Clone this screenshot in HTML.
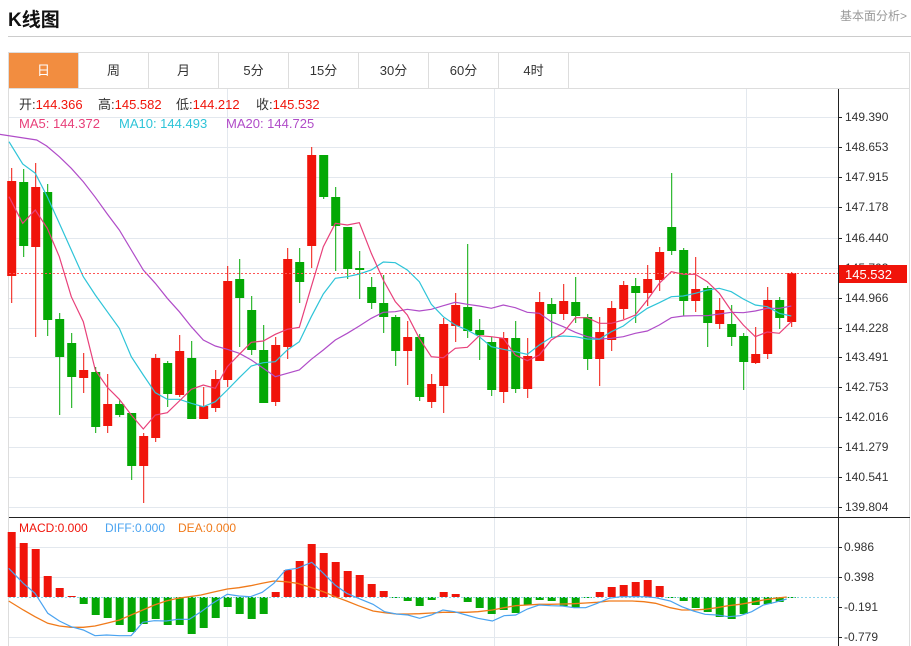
<!DOCTYPE html>
<html><head><meta charset="utf-8"><style>
*{margin:0;padding:0;box-sizing:border-box}
body{width:911px;height:646px;background:#fff;font-family:"Liberation Sans","Noto Sans CJK SC",sans-serif;position:relative;overflow:hidden}
.t{position:absolute;left:8px;top:5px;font-size:19px;font-weight:bold;color:#111}
.r{position:absolute;right:4px;top:7px;font-size:12px;color:#999}
.hr{position:absolute;left:8px;right:0;top:36px;border-top:1px solid #ccc}
.tabs{position:absolute;left:8px;top:52px;width:902px;height:37px;border:1px solid #ddd;border-bottom:1px solid #ddd}
.tab{position:absolute;top:0;height:35px;width:70px;line-height:35px;text-align:center;font-size:13px;color:#333;border-right:1px solid #ddd}
.on{background:#f28d40;color:#fff}
svg{position:absolute;left:0;top:0}
</style></head><body>
<div class="t">K线图</div><div class="r">基本面分析&gt;</div>
<div class="hr"></div>
<div class="tabs">
<div class="tab on" style="left:0">日</div><div class="tab" style="left:70px">周</div><div class="tab" style="left:140px">月</div><div class="tab" style="left:210px">5分</div><div class="tab" style="left:280px">15分</div><div class="tab" style="left:350px">30分</div><div class="tab" style="left:420px">60分</div><div class="tab" style="left:490px">4时</div>
</div>
<svg id="s" width="911" height="646" xmlns="http://www.w3.org/2000/svg" font-family="Liberation Sans, Noto Sans CJK SC, sans-serif">
<line x1="8.5" y1="89" x2="8.5" y2="646" stroke="#ddd"/>
<line x1="909.5" y1="89" x2="909.5" y2="646" stroke="#ddd"/>
<g id="grid" stroke="#e3e8ee" stroke-width="1"></g>
<g id="c"></g>
<g id="m"></g>
<line x1="9" y1="273.5" x2="838" y2="273.5" stroke="#f55" stroke-dasharray="2,2"/>
<line x1="838.5" y1="89" x2="838.5" y2="646" stroke="#222"/>
<line x1="9" y1="517.5" x2="910" y2="517.5" stroke="#222"/>
<g id="ax" font-size="12" fill="#333"></g>
<rect x="839" y="265" width="68" height="18" fill="#f0140a"/>
<text x="845" y="279" font-size="13" fill="#fff">145.532</text>
<g font-size="13">
<text x="19" y="109" fill="#333">开:<tspan fill="#f0140a">144.366</tspan></text>
<text x="98" y="109" fill="#333">高:<tspan fill="#f0140a">145.582</tspan></text>
<text x="176" y="109" fill="#333">低:<tspan fill="#f0140a">144.212</tspan></text>
<text x="256" y="109" fill="#333">收:<tspan fill="#f0140a">145.532</tspan></text>
<text x="19" y="128" fill="#e8407a">MA5: 144.372</text>
<text x="119" y="128" fill="#2ec4d8">MA10: 144.493</text>
<text x="226" y="128" fill="#b04cc8">MA20: 144.725</text>
</g>
<g font-size="12">
<text x="19" y="532" fill="#f0140a">MACD:0.000</text>
<text x="105" y="532" fill="#4aa3f0">DIFF:0.000</text>
<text x="178" y="532" fill="#f07a1a">DEA:0.000</text>
</g>
</svg>
<script>
var NS="http://www.w3.org/2000/svg";
function el(p,t,a){var e=document.createElementNS(NS,t);for(var k in a)e.setAttribute(k,a[k]);document.getElementById(p).appendChild(e);return e;}
var hy=[117,147,177,207,238,268,298,328,357,387,417,447,477,507];
var lb=["149.390","148.653","147.915","147.178","146.440","145.703","144.966","144.228","143.491","142.753","142.016","141.279","140.541","139.804"];
hy.forEach(function(y,i){el("grid","line",{x1:9,x2:838,y1:y+.5,y2:y+.5});el("ax","line",{x1:838,x2:842,y1:y+.5,y2:y+.5,stroke:"#222"});var t=el("ax","text",{x:845,y:y+4});t.textContent=lb[i];});
[227,494,746].forEach(function(x){el("grid","line",{x1:x+.5,x2:x+.5,y1:89,y2:646});});
[547,577,637].forEach(function(y){el("grid","line",{x1:9,x2:838,y1:y+.5,y2:y+.5});});
[["0.986",547],["0.398",577],["-0.191",607],["-0.779",637]].forEach(function(a){el("ax","line",{x1:838,x2:842,y1:a[1]+.5,y2:a[1]+.5,stroke:"#222"});var t=el("ax","text",{x:844,y:a[1]+4});t.textContent=a[0];});
var C=[[1,181,276,168,303],[0,182,246,169,257],[1,187,247,163,337],[0,192,320,184,336],[0,319,357,313,415],[0,343,377,333,408],[1,370,378,353,393],[0,372,427,367,433],[1,404,426,374,433],[0,404,415,400,417],[0,413,466,413,480],[1,436,466,433,503],[1,358,438,354,442],[0,363,394,361,407],[1,351,395,335,397],[0,358,419,341,419],[1,406,419,387,419],[1,379,408,370,412],[1,281,380,266,387],[0,279,298,259,347],[0,310,350,296,355],[0,350,403,325,403],[1,345,402,337,406],[1,259,347,248,359],[0,262,282,248,303],[1,155,246,147,268],[0,155,197,155,199],[0,197,226,187,271],[0,227,269,227,279],[0,268,270,251,299],[0,287,303,277,309],[0,303,317,275,333],[0,317,351,315,366],[1,337,351,321,385],[0,337,397,334,401],[1,384,402,374,408],[1,324,386,318,413],[1,305,326,293,342],[0,307,331,244,338],[0,330,335,319,360],[0,342,390,337,396],[1,338,392,332,403],[0,338,389,321,393],[1,356,389,338,398],[1,302,361,292,361],[0,304,314,298,338],[1,301,314,284,320],[0,302,316,277,323],[0,317,359,314,370],[1,332,359,317,386],[1,308,340,301,351],[1,285,309,281,319],[0,286,293,278,323],[1,279,293,265,306],[1,252,280,247,291],[0,227,251,173,255],[0,250,301,248,316],[1,289,301,257,312],[0,288,323,286,347],[1,310,324,298,329],[0,324,337,305,346],[0,336,362,333,390],[1,354,363,327,364],[1,300,354,287,359],[0,300,318,297,329],[1,273,322,272,327]];
C.forEach(function(c,i){var x=11.7+12*i,col=c[0]?"#f0140a":"#04a805";
el("c","line",{x1:x,x2:x,y1:c[3],y2:c[4],stroke:col,"stroke-width":1});
el("c","rect",{x:x-4.5,y:c[1],width:9,height:Math.max(1,c[2]-c[1]),fill:col});});
function pl(g,pts,col,sx,ox,sy,oy,w){var s=pts.map(function(p){return (ox+p[0]/sx).toFixed(1)+","+(oy+p[1]/sy).toFixed(1)}).join(" ");el(g,"polyline",{points:s,fill:"none",stroke:col,"stroke-width":w||1.2});}
var ma5a=[[27,170],[68,250],[106,210],[142,265],[178,350],[214,470],[250,545],[286,690],[322,742],[358,778],[394,825],[430,867],[466,825],[502,818],[538,783],[574,748],[610,735],[646,745],[682,680],[718,643],[754,607],[790,603],[826,583],[862,568],[898,562],[934,440],[970,320],[1006,250],[1042,255],[1078,248],[1114,340],[1150,420],[1186,485],[1222,525],[1258,595],[1294,650],[1330,653],[1366,625]];
var ma5b=[[52,622],[88,587],[124,590],[160,595],[196,645],[232,662],[268,645],[304,600],[340,578],[376,533],[412,533],[448,550],[484,550],[520,540],[556,525],[592,480],[628,430],[664,395],[700,403],[736,403],[772,425],[808,460],[844,512],[880,555],[916,590],[952,576],[988,580],[1024,545]];
var ma10a=[[27,5],[68,72],[106,100],[142,170],[178,250],[214,330],[250,410],[286,465],[322,515],[358,565],[394,650],[430,705],[466,758],[502,778],[538,778],[574,790],[610,800],[646,785],[682,750],[718,713],[754,678],[790,668],[826,665],[862,630],[898,605],[934,530],[970,462],[1006,415],[1042,410],[1078,402],[1114,390],[1150,366],[1186,368],[1222,390],[1258,425],[1294,493],[1330,530],[1366,555]];
var ma10b=[[52,570],[88,590],[124,620],[160,628],[196,635],[232,643],[268,615],[304,592],[340,588],[376,590],[412,597],[448,598],[484,575],[520,558],[556,530],[592,505],[628,488],[664,470],[700,468],[736,460],[772,450],[808,445],[844,455],[880,477],[916,495],[952,500],[988,520],[1024,528]];
var ma20a=[[-20,-20],[110,0],[140,18],[178,50],[214,85],[250,125],[286,172],[322,222],[358,270],[394,330],[430,390],[466,430],[502,475],[538,515],[574,560],[610,600],[646,618],[682,628],[718,640],[754,660],[790,685],[826,710],[862,700],[898,690],[934,658],[970,630],[1006,600],[1042,580],[1078,558],[1114,535],[1150,517],[1186,515],[1222,508],[1258,513],[1294,508],[1330,497],[1366,487]];
var ma20b=[[52,493],[88,498],[124,505],[160,495],[196,503],[232,517],[268,520],[304,545],[340,560],[376,577],[412,590],[448,597],[484,595],[520,590],[556,580],[592,573],[628,555],[664,533],[700,528],[736,527],[772,527],[808,522],[844,517],[880,518],[916,513],[952,505],[988,505],[1024,498]];
function cat(a,b){return a.map(function(p){return [p[0]/3,140+p[1]/3]}).concat(b.map(function(p){return [450+p[0]/3,140+p[1]/3]}));}
pl("m",cat(ma20a,ma20b),"#b04cc8",1,0,1,0);
pl("m",cat(ma10a,ma10b),"#2ec4d8",1,0,1,0);
pl("m",cat(ma5a,ma5b),"#e8407a",1,0,1,0);
var H=[532,543,549,576,588,596,604,615,618,625,632,624,619,625,625,634,628,618,607,614,619,614,592,570,561,544,553,562,571,575,584,591,598,601,606,600,592,594,602,608,614,610,613,605,600,601,606,608,598,592,587,585,582,580,586,597,601,608,612,617,619,614,605,604,602,598];
H.forEach(function(h,i){var x=11.7+12*i,z=597;var up=h<z;el("c","rect",{x:x-4,y:up?h:z,width:8,height:Math.max(1,Math.abs(h-z)),fill:up?"#f0140a":"#04a805"});});
el("m","line",{x1:9,x2:838,y1:597.5,y2:597.5,stroke:"#8cd3ea","stroke-dasharray":"2,2"});
var diff=[[15,160],[40,205],[60,235],[82,295],[102,318],[122,335],[143,345],[163,362],[183,360],[205,362],[225,362],[245,322],[265,317],[285,318],[305,313],[325,313],[345,290],[365,265],[390,238],[410,243],[430,245],[450,232],[470,205],[490,165],[510,160],[535,142],[555,175],[575,210],[595,235],[615,250],[640,268],[660,290],[680,297],[700,300],[720,310],[740,300],[760,285],[780,290],[800,300],[820,310],[845,318],[865,302],[885,300],[905,282],[925,270],[945,272],[965,273],[985,278],[1005,278],[1025,265],[1045,250],[1065,245],[1085,245],[1105,245],[1125,248],[1150,258],[1170,275],[1190,288],[1210,298],[1230,300],[1250,305],[1270,302],[1290,290],[1310,270],[1330,262],[1350,252]];
var dea=[[15,258],[40,285],[60,305],[82,325],[102,333],[122,337],[143,337],[163,333],[183,325],[205,315],[225,300],[245,285],[265,270],[285,258],[305,250],[325,245],[345,240],[365,232],[390,222],[410,218],[430,212],[450,205],[470,198],[490,200],[510,205],[535,218],[555,230],[575,245],[595,258],[615,272],[640,288],[660,293],[680,297],[700,297],[720,296],[740,294],[760,292],[780,292],[800,292],[820,290],[845,285],[865,278],[885,272],[905,270],[925,268],[945,268],[965,267],[985,266],[1005,264],[1025,262],[1045,258],[1065,258],[1085,258],[1105,260],[1125,265],[1150,278],[1170,285],[1190,285],[1210,283],[1230,278],[1250,272],[1270,268],[1290,262],[1310,255],[1330,250],[1350,246]];
pl("m",dea,"#f07a1a",1.716,0,3,515,1.3);
pl("m",diff,"#4aa3f0",1.716,0,3,515,1.2);
</script>
</body></html>
